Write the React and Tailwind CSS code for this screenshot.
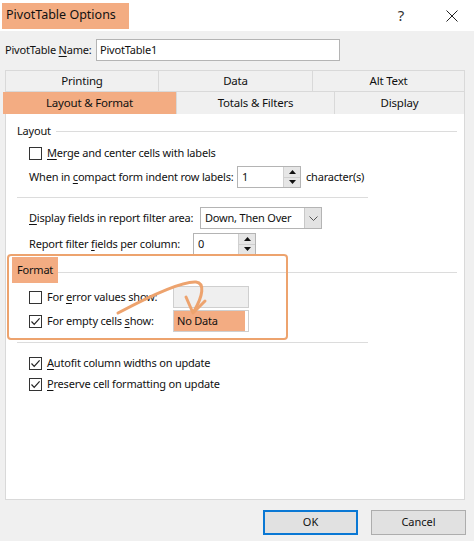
import React from "react";

const F = { fontFamily: '"Noto Sans", "Open Sans", sans-serif' };

function Box({ checked }) {
  return (
    <span className="w-[13px] h-[13px] border border-[#333] bg-white flex items-center justify-center shrink-0">
      {checked && (
        <svg width="11" height="11" viewBox="0 0 11 11">
          <path d="M1.5 5.5 L4.2 8.3 L9.6 2.4" fill="none" stroke="#222" strokeWidth="1.2" />
        </svg>
      )}
    </span>
  );
}

function Spin({ value, w }) {
  return (
    <div className="flex h-[22px] border border-[#b4b4b4] bg-white shrink-0">
      <div className={`${w} px-[4px] flex items-center`}>{value}</div>
      <div className="w-[17px] flex flex-col border-l border-[#d0d0d0]">
        <div className="flex-1 bg-[#e6e6e6] flex items-center justify-center border-b border-[#cfcfcf]">
          <svg width="7" height="4" viewBox="0 0 7 4"><path d="M0 4 L3.5 0 L7 4 Z" fill="#111" /></svg>
        </div>
        <div className="flex-1 bg-[#e6e6e6] flex items-center justify-center">
          <svg width="7" height="4" viewBox="0 0 7 4"><path d="M0 0 L3.5 4 L7 0 Z" fill="#111" /></svg>
        </div>
      </div>
    </div>
  );
}

const U = ({ children }) => <span className="underline underline-offset-2">{children}</span>;

export default function App() {
  return (
    <div className="relative w-[474px] h-[541px] bg-[#f0f0f0] text-[11px] tracking-[-0.2px] text-[#111] flex flex-col overflow-hidden whitespace-nowrap" style={F}>
      {/* title bar */}
      <div className="h-[31px] bg-white flex items-center pl-[2px] pr-[16px] shrink-0">
        <div className="h-[26px] bg-[#f3ac82] flex items-center px-[4px] w-[127px] text-[12.5px] tracking-normal text-[#111]">PivotTable Options</div>
        <div className="flex-1" />
        <div className="text-[15px] text-[#333] mr-[42px]">?</div>
        <svg width="12" height="12" viewBox="0 0 12 12"><path d="M0.5 0.5 L11.5 11.5 M11.5 0.5 L0.5 11.5" stroke="#222" strokeWidth="1" /></svg>
      </div>

      {/* name row */}
      <div className="h-[32px] flex items-center pl-[5px] mt-[3px] shrink-0">
        <span className="w-[91px]">PivotTable <U>N</U>ame:</span>
        <div className="w-[244px] h-[22px] border border-[#b4b4b4] bg-white flex items-center px-[3px]">PivotTable1</div>
      </div>

      {/* tabs */}
      <div className="ml-[5px] w-[460px] mt-[4px] shrink-0 text-[11.5px]">
        <div className="grid grid-cols-[153px_154px_153px] h-[21px] border-t border-[#d9d9d9]">
          <div className="flex items-center justify-center border-l border-[#d9d9d9]">Printing</div>
          <div className="flex items-center justify-center border-l border-[#d9d9d9]">Data</div>
          <div className="flex items-center justify-center border-l border-r border-[#d9d9d9]">Alt Text</div>
        </div>
        <div className="grid grid-cols-[171px_158px_131px] h-[23px] border-t border-[#d9d9d9]">
          <div className="flex items-center justify-center bg-[#f3ac82] -ml-[2px] w-[173px]">Layout &amp; Format</div>
          <div className="flex items-center justify-center border-l border-[#d9d9d9]">Totals &amp; Filters</div>
          <div className="flex items-center justify-center border-l border-r border-[#d9d9d9]">Display</div>
        </div>
      </div>

      {/* panel */}
      <div className="relative ml-[5px] w-[460px] h-[386px] bg-white border border-[#d9d9d9] border-t-0 shrink-0 pt-[7px]">
        <div className="h-[20px] flex items-center pl-[11px] pr-[7px]">
          <span>Layout</span>
          <div className="flex-1 h-px bg-[#dcdcdc] ml-[5px]" />
        </div>
        <div className="h-[24px] flex items-center pl-[23px] gap-[5px]">
          <Box />
          <span><U>M</U>erge and center cells with labels</span>
        </div>
        <div className="h-[24px] flex items-center pl-[23px]">
          <span className="w-[208px]">When in <U>c</U>ompact form indent row labels:</span>
          <Spin value="1" w="w-[45px]" />
          <span className="ml-[5px]">character(s)</span>
        </div>
        <div className="h-[16px] flex items-center pl-[11px]">
          <div className="w-[351px] h-px bg-[#dcdcdc]" />
        </div>
        <div className="h-[26px] flex items-center pl-[23px]">
          <span className="w-[171px]"><U>D</U>isplay fields in report filter area:</span>
          <div className="w-[122px] h-[22px] border border-[#b4b4b4] bg-white flex">
            <div className="flex-1 flex items-center px-[4px]">Down, Then Over</div>
            <div className="w-[17px] bg-[#e3e3e3] border-l border-[#c8c8c8] flex items-center justify-center">
              <svg width="9" height="5" viewBox="0 0 9 5"><path d="M0.5 0.5 L4.5 4.5 L8.5 0.5" fill="none" stroke="#555" strokeWidth="1" /></svg>
            </div>
          </div>
        </div>
        <div className="h-[26px] flex items-center pl-[23px]">
          <span className="w-[164px]">Report filter <U>f</U>ields per column:</span>
          <Spin value="0" w="w-[44px]" />
        </div>
        <div className="h-[26px] flex items-center pl-[6px] pr-[7px]">
          <span className="h-[26px] bg-[#f3ac82] flex items-center px-[5px]">Format</span>
          <div className="flex-1 h-px bg-[#dcdcdc] mt-[4px]" />
        </div>
        <div className="h-[24px] mt-[2px] flex items-center pl-[23px]">
          <Box />
          <span className="ml-[5px] w-[126px]">For <U>e</U>rror values show:</span>
          <div className="w-[76px] h-[22px] border border-[#cfcfcf] bg-[#efefef]" />
        </div>
        <div className="h-[24px] flex items-center pl-[23px]">
          <Box checked />
          <span className="ml-[5px] w-[126px]">For empty cells <U>s</U>how:</span>
          <div className="w-[76px] h-[22px] border border-[#cfcfcf] bg-white flex">
            <div className="flex-1 bg-[#f3ac82] flex items-center px-[3px]">No Data</div>
            <div className="w-[3px]" />
          </div>
        </div>
        <div className="h-[18px] flex items-center pl-[11px]">
          <div className="w-[351px] h-px bg-[#dcdcdc]" />
        </div>
        <div className="h-[21px] mt-[2px] flex items-center pl-[23px] gap-[5px]">
          <Box checked />
          <span><U>A</U>utofit column widths on update</span>
        </div>
        <div className="h-[21px] flex items-center pl-[23px] gap-[5px]">
          <Box checked />
          <span><U>P</U>reserve cell formatting on update</span>
        </div>

        {/* annotation outline */}
        <div className="absolute left-[1px] top-[140px] w-[281px] h-[86px] border-2 border-[#eda36e] rounded-[4px] pointer-events-none" />
      </div>

      {/* buttons */}
      <div className="flex justify-end gap-[13px] pr-[8px] mt-[10px] tracking-normal">
        <div className="w-[95px] h-[25px] bg-[#e1e1e1] border-2 border-[#0a78d4] flex items-center justify-center">OK</div>
        <div className="w-[95px] h-[25px] bg-[#e1e1e1] border border-[#adadad] flex items-center justify-center">Cancel</div>
      </div>

      {/* arrow annotation */}
      <svg className="absolute left-0 top-0 pointer-events-none" width="474" height="541" viewBox="0 0 474 541">
        <path d="M118 313 C 150 296, 182 281, 196 282 C 205 283, 203 296, 194 311" fill="none" stroke="#eda36e" strokeWidth="3" strokeLinecap="round" />
        <path d="M186 297 L193 313 L205 301" fill="none" stroke="#eda36e" strokeWidth="3" strokeLinecap="round" strokeLinejoin="round" />
      </svg>
    </div>
  );
}
